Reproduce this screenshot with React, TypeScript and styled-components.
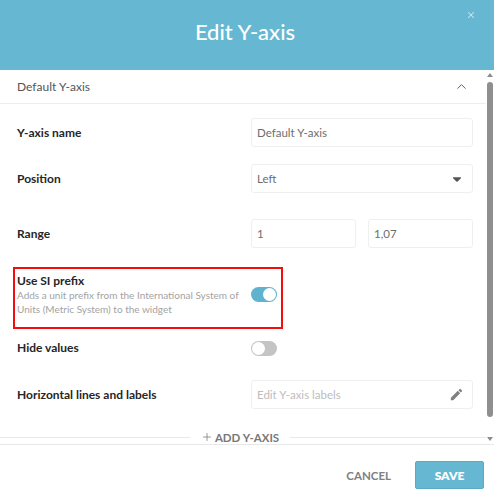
import React from "react";
import styled, { createGlobalStyle } from "styled-components";
import { ChevronUp, Plus, X } from "lucide-react";
import { FaCaretDown } from "react-icons/fa";
import { MdEdit } from "react-icons/md";

const GlobalStyle = createGlobalStyle`
  html, body {
    margin: 0;
    padding: 0;
    background: #fff;
  }
  * {
    box-sizing: border-box;
  }
`;

const App = () => {
  return (
    <Modal>
      <GlobalStyle />
      <Header>
        <Title>Edit Y-axis</Title>
        <CloseButton>
          <X size={10} strokeWidth={2.5} />
        </CloseButton>
      </Header>

      <Body>
        <Content>
          <AccordionHead>
            <span>Default Y-axis</span>
            <ChevronUp size={15} strokeWidth={1.5} />
          </AccordionHead>

          <Form>
            <Row $top={14}>
              <Label>Y-axis name</Label>
              <Field>Default Y-axis</Field>
            </Row>
            <Row $top={17}>
              <Label>Position</Label>
              <Field>
                Left
                <FaCaretDown size={14} color="#555" />
              </Field>
            </Row>
            <Row $top={26}>
              <Label>Range</Label>
              <RangeFields>
                <Field>1</Field>
                <Field>1,07</Field>
              </RangeFields>
            </Row>

            <Highlight>
              <div>
                <Label>Use SI prefix</Label>
                <Hint>
                  Adds a unit prefix from the International System of Units
                  (Metric System) to the widget
                </Hint>
              </div>
              <Toggle $on />
            </Highlight>

            <Row $top={11}>
              <Label>Hide values</Label>
              <Toggle />
            </Row>
            <Row $top={24}>
              <Label>Horizontal lines and labels</Label>
              <Field $muted>
                Edit Y-axis labels
                <MdEdit size={15} color="#808080" />
              </Field>
            </Row>
          </Form>

          <AddAxis>
            <AddLabel>
              <Plus size={12} strokeWidth={1.5} />
              ADD Y-AXIS
            </AddLabel>
          </AddAxis>
        </Content>

        <Scrollbar>
          <ArrowUp />
          <Thumb />
          <ArrowDown />
        </Scrollbar>
      </Body>

      <Footer>
        <CancelButton>CANCEL</CancelButton>
        <SaveButton>SAVE</SaveButton>
      </Footer>
    </Modal>
  );
};

export default App;

const Modal = styled.div`
  display: flex;
  flex-direction: column;
  width: 494px;
  height: 500px;
  overflow: hidden;
  background: #fff;
  font-family: "Lato", "Noto Sans", sans-serif;
  color: #212121;
`;

const Header = styled.header`
  position: relative;
  display: flex;
  align-items: center;
  justify-content: center;
  flex: 0 0 70px;
  padding: 0 4px 8px 0;
  background: #66b7d2;
`;

const Title = styled.h1`
  margin: 0;
  font-size: 22px;
  font-weight: 500;
  color: #fff;
`;

const CloseButton = styled.div`
  position: absolute;
  top: 10px;
  right: 18px;
  display: flex;
  color: #cde8f0;
`;

const Body = styled.div`
  display: flex;
  height: 375px;
  border-bottom: 1px solid #e8e8e8;
`;

const Content = styled.div`
  display: flex;
  flex-direction: column;
  flex: 1;
  min-width: 0;
`;

const AccordionHead = styled.div`
  display: flex;
  align-items: center;
  justify-content: space-between;
  height: 34px;
  padding: 0 17px 1px 17px;
  border-bottom: 1px solid #ededed;
  font-size: 12px;
  color: #555;
`;

const Form = styled.div`
  display: flex;
  flex-direction: column;
  padding: 0 13px 0 17px;
  height: 326px;
`;

const Row = styled.div<{ $top: number }>`
  display: grid;
  grid-template-columns: 234px 222px;
  align-items: center;
  margin-top: ${(p) => p.$top}px;
`;

const Label = styled.div`
  font-size: 12px;
  font-weight: 700;
  line-height: 16px;
  color: #262626;
`;

const Field = styled.div<{ $muted?: boolean }>`
  display: flex;
  align-items: center;
  justify-content: space-between;
  height: 29px;
  padding: 0 8px 0 5px;
  border: 1px solid #efefef;
  border-radius: 3px;
  font-size: 11.5px;
  color: ${(p) => (p.$muted ? "#bdbdbd" : "#6e6e6e")};
`;

const RangeFields = styled.div`
  display: grid;
  grid-template-columns: 105px 105px;
  gap: 12px;
`;

const Highlight = styled.div`
  display: grid;
  grid-template-columns: 234px 26px;
  align-items: start;
  width: 270px;
  height: 62px;
  margin: 19px 0 0 -4px;
  padding: 4px 0 0 2px;
  border: 2px solid #f40d0d;

  > :last-child {
    margin-top: 14px;
  }
`;

const Hint = styled.div`
  max-width: 224px;
  font-size: 10px;
  line-height: 13.5px;
  color: #a3a3a3;
`;

const Toggle = styled.div<{ $on?: boolean }>`
  position: relative;
  width: 26px;
  height: 15px;
  border-radius: 8px;
  background: ${(p) => (p.$on ? "#5fb3cf" : "#c4c4c4")};

  &::after {
    content: "";
    position: absolute;
    top: 1px;
    left: ${(p) => (p.$on ? "12px" : "1px")};
    width: 13px;
    height: 13px;
    border-radius: 50%;
    background: #fff;
  }
`;

const AddAxis = styled.div`
  display: flex;
  align-items: center;
  height: 14px;

  &::before,
  &::after {
    content: "";
    height: 1px;
    background: #e8e8e8;
  }
  &::before {
    flex: 0 0 190px;
  }
  &::after {
    flex: 1;
  }
`;

const AddLabel = styled.div`
  display: flex;
  align-items: center;
  justify-content: center;
  gap: 2px;
  flex: 0 0 100px;
  font-size: 11.5px;
  font-weight: 700;
  color: #787878;
`;

const Scrollbar = styled.div`
  display: flex;
  flex-direction: column;
  align-items: center;
  flex: 0 0 8px;
  padding: 3px 0;
`;

const ArrowUp = styled.div`
  width: 0;
  height: 0;
  border-left: 3px solid transparent;
  border-right: 3px solid transparent;
  border-bottom: 4px solid #8c8c8c;
`;

const ArrowDown = styled.div`
  width: 0;
  height: 0;
  margin-top: auto;
  border-left: 3px solid transparent;
  border-right: 3px solid transparent;
  border-top: 4px solid #8c8c8c;
`;

const Thumb = styled.div`
  width: 6px;
  height: 335px;
  margin-top: 5px;
  border-radius: 3px;
  background: #8f8f8f;
`;

const Footer = styled.footer`
  display: flex;
  align-items: center;
  justify-content: flex-end;
  gap: 24px;
  flex: 1;
  padding: 5px 10px 0 0;
`;

const CancelButton = styled.div`
  font-size: 11.5px;
  font-weight: 700;
  color: #808080;
`;

const SaveButton = styled.div`
  display: flex;
  align-items: center;
  justify-content: center;
  width: 69px;
  height: 28px;
  border: 1px solid #5aaac5;
  border-radius: 2px;
  background: #66b7d2;
  font-size: 12px;
  font-weight: 800;
  color: #fff;
`;
